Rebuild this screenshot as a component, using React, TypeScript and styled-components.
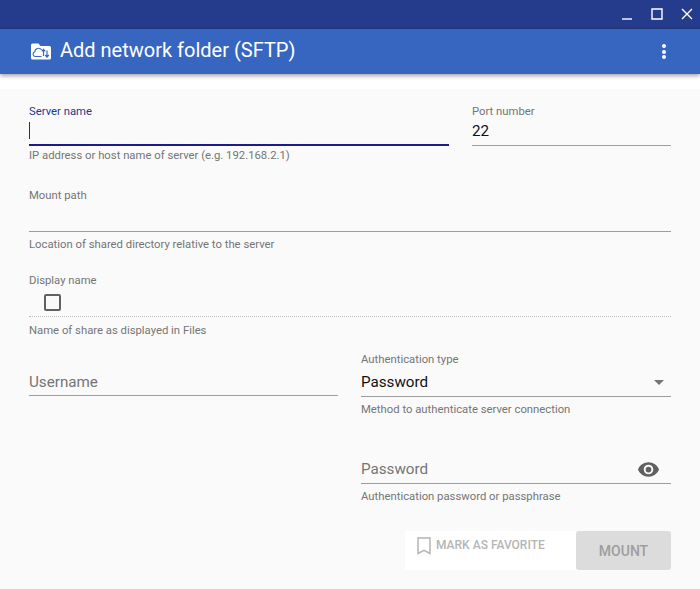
import styled, { createGlobalStyle } from 'styled-components'

const GlobalStyle = createGlobalStyle`
  html, body {
    margin: 0;
    padding: 0;
    background: #fafafa;
  }
  * {
    box-sizing: border-box;
  }
`

export default function App() {
  return (
    <Page>
      <GlobalStyle />
      <TitleBar>
        <WindowButton>
          <svg width="14" height="14" viewBox="0 0 14 14">
            <path d="M2 12h10" stroke="#fff" strokeWidth="1.4" />
          </svg>
        </WindowButton>
        <WindowButton>
          <svg width="14" height="14" viewBox="0 0 14 14">
            <path d="M2 2h10v10H2z" fill="none" stroke="#fff" strokeWidth="1.4" />
          </svg>
        </WindowButton>
        <WindowButton>
          <svg width="14" height="14" viewBox="0 0 14 14">
            <path d="M2 2l10 10M12 2L2 12" stroke="#fff" strokeWidth="1.4" />
          </svg>
        </WindowButton>
      </TitleBar>
      <AppBar>
        <TitleGroup>
          <FolderIcon width="20" height="17" viewBox="0 0 20 17">
            <path
              d="M1.5 0.5h6l2 2.5h9a1.5 1.5 0 0 1 1.5 1.5v10.5a1.5 1.5 0 0 1-1.5 1.5h-17A1.5 1.5 0 0 1 0 15V2a1.5 1.5 0 0 1 1.5-1.5z"
              fill="#fff"
            />
            <path
              d="M10.5 13.5H4.2a2.4 2.4 0 0 1-.4-4.7A3.7 3.7 0 0 1 10.6 7"
              fill="none"
              stroke="#3766c0"
              strokeWidth="1.1"
            />
            <path
              d="M12.5 13V6.5M10.7 8.4l1.8-2 1.8 2M16 7.5V14M14.2 12l1.8 2 1.8-2"
              fill="none"
              stroke="#3766c0"
              strokeWidth="1.2"
            />
          </FolderIcon>
          <Title>Add network folder (SFTP)</Title>
        </TitleGroup>
        <MoreDots>
          <span />
          <span />
          <span />
        </MoreDots>
      </AppBar>
      <WhiteStrip />
      <Form>
        <Row $after={24}>
          <Field $width={420}>
            <SmallLabel $active>Server name</SmallLabel>
            <InputArea $active $height={26}>
              <Caret />
            </InputArea>
            <Hint $top={2}>IP address or host name of server (e.g. 192.168.2.1)</Hint>
          </Field>
          <Field $width={199}>
            <SmallLabel>Port number</SmallLabel>
            <InputArea $height={26}>
              <Value>22</Value>
            </InputArea>
          </Field>
        </Row>
        <Row $after={20}>
          <Field>
            <SmallLabel>Mount path</SmallLabel>
            <InputArea />
            <Hint>Location of shared directory relative to the server</Hint>
          </Field>
        </Row>
        <Row $after={13}>
          <Field>
            <SmallLabel>Display name</SmallLabel>
            <InputArea $dotted>
              <CheckBox />
            </InputArea>
            <Hint $top={6}>Name of share as displayed in Files</Hint>
          </Field>
        </Row>
        <Row $after={38}>
          <Field $width={309}>
            <SmallLabel />
            <InputArea $pad={4}>
              <Placeholder>Username</Placeholder>
            </InputArea>
          </Field>
          <Field $width={310}>
            <SmallLabel>Authentication type</SmallLabel>
            <InputArea $height={29}>
              <Value>Password</Value>
              <Arrow />
            </InputArea>
            <Hint>Method to authenticate server connection</Hint>
          </Field>
        </Row>
        <Row $after={26} $end>
          <Field $width={310}>
            <InputArea>
              <Placeholder>Password</Placeholder>
              <EyeIcon width="23" height="23" viewBox="0 0 24 24" fill="#616161">
                <path d="M12 4.5C7 4.5 2.73 7.61 1 12c1.73 4.39 6 7.5 11 7.5s9.27-3.11 11-7.5c-1.73-4.39-6-7.5-11-7.5zM12 17a5 5 0 1 1 0-10 5 5 0 0 1 0 10zm0-8a3 3 0 1 0 0 6 3 3 0 0 0 0-6z" />
              </EyeIcon>
            </InputArea>
            <Hint>Authentication password or passphrase</Hint>
          </Field>
        </Row>
        <Actions>
          <FavoriteButton>
            <svg width="14" height="18" viewBox="0 0 14 18">
              <path d="M1 1h12v15.5l-6-3.2-6 3.2z" fill="none" stroke="#b5b5b5" strokeWidth="1.5" />
            </svg>
            MARK AS FAVORITE
          </FavoriteButton>
          <MountButton>MOUNT</MountButton>
        </Actions>
      </Form>
    </Page>
  )
}

const Page = styled.div`
  width: 700px;
  height: 589px;
  overflow: hidden;
  background: #fafafa;
  font-family: Roboto, 'Liberation Sans', sans-serif;
`

const TitleBar = styled.div`
  height: 29px;
  background: #253b8c;
  border-bottom: 1px solid #22377f;
  display: flex;
  justify-content: flex-end;
  align-items: center;
  gap: 16px;
  padding-right: 6px;
`

const WindowButton = styled.div`
  width: 14px;
  height: 14px;
  display: flex;
`

const AppBar = styled.div`
  position: relative;
  height: 45px;
  background: #3766c0;
  box-shadow: 0 2px 4px rgba(0, 0, 0, 0.35);
  display: flex;
  align-items: center;
  justify-content: space-between;
  padding: 0 34px 3px 31px;
`

const TitleGroup = styled.div`
  display: flex;
  align-items: center;
  gap: 9px;
`

const FolderIcon = styled.svg`
  margin-top: 2px;
`

const Title = styled.div`
  color: #fff;
  font-size: 20px;
  font-weight: 400;
`

const MoreDots = styled.div`
  display: flex;
  flex-direction: column;
  gap: 1.5px;
  margin-top: 3px;
  span {
    width: 4px;
    height: 4px;
    border-radius: 50%;
    background: #fff;
  }
`

const WhiteStrip = styled.div`
  height: 15px;
  background: #fff;
`

const Form = styled.div`
  padding: 15px 29px 0;
  display: flex;
  flex-direction: column;
`

const Row = styled.div<{ $after: number; $end?: boolean }>`
  display: flex;
  gap: 23px;
  align-items: flex-start;
  justify-content: ${(p) => (p.$end ? 'flex-end' : 'flex-start')};
  margin-bottom: ${(p) => p.$after}px;
`

const Field = styled.div<{ $width?: number }>`
  width: ${(p) => (p.$width ? `${p.$width}px` : '100%')};
`

const SmallLabel = styled.div<{ $active?: boolean }>`
  height: 16px;
  font-size: 11.3px;
  line-height: 16px;
  color: ${(p) => (p.$active ? '#22388f' : '#757575')};
`

const InputArea = styled.div<{ $active?: boolean; $dotted?: boolean; $height?: number; $pad?: number }>`
  height: ${(p) => p.$height ?? 28}px;
  padding-bottom: ${(p) => p.$pad ?? 5}px;
  display: flex;
  align-items: flex-end;
  justify-content: space-between;
  border-bottom: ${(p) =>
    p.$active ? '2px solid #1d1a8a' : p.$dotted ? '1px dotted #bdbdbd' : '1px solid #9e9e9e'};
`

const Caret = styled.div`
  width: 1px;
  height: 17px;
  background: #333;
`

const Value = styled.span`
  font-size: 15.2px;
  line-height: 18px;
  color: #111;
`

const Placeholder = styled.span`
  font-size: 15.2px;
  line-height: 18px;
  color: #757575;
`

const EyeIcon = styled.svg`
  margin: 0 11px -3px 0;
`

const Arrow = styled.div`
  width: 0;
  height: 0;
  margin: 0 7px 6px 0;
  border-left: 5px solid transparent;
  border-right: 5px solid transparent;
  border-top: 5px solid #757575;
`

const CheckBox = styled.div`
  width: 17px;
  height: 17px;
  margin-left: 15px;
  border: 2px solid #616161;
  border-radius: 2px;
`

const Hint = styled.div<{ $top?: number }>`
  margin-top: ${(p) => p.$top ?? 5}px;
  font-size: 11.3px;
  line-height: 16px;
  color: #757575;
`

const Actions = styled.div`
  display: flex;
  justify-content: flex-end;
`

const FavoriteButton = styled.div`
  width: 171px;
  height: 39px;
  background: #fff;
  color: #b5b5b5;
  font-size: 12px;
  font-weight: 500;
  line-height: 16px;
  display: flex;
  align-items: flex-start;
  gap: 5px;
  padding: 6px 0 0 12px;
`

const MountButton = styled.div`
  width: 95px;
  height: 39px;
  background: #dcdcdc;
  color: #9e9e9e;
  border-radius: 3px;
  font-size: 14px;
  font-weight: 500;
  display: flex;
  align-items: center;
  justify-content: center;
`
